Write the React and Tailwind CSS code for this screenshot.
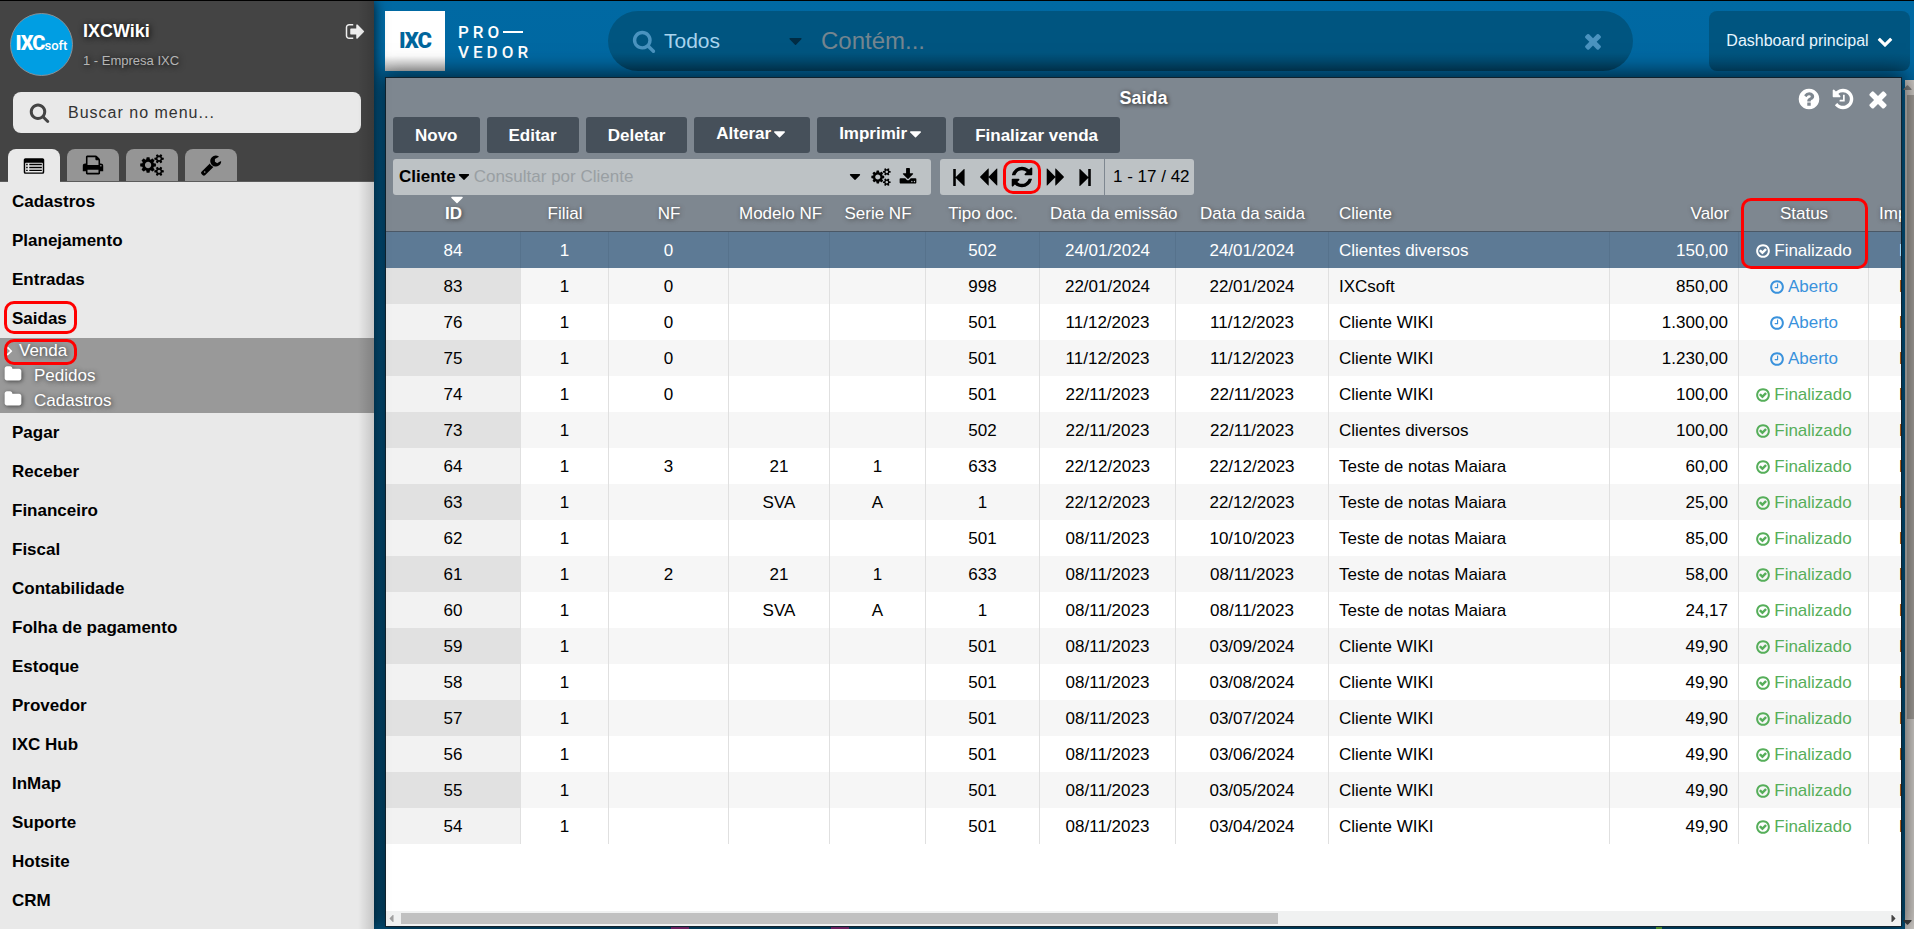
import { useState } from "react";

const PATHS = {
  times:
    "M1490 1322q0 40-28 68l-136 136q-28 28-68 28t-68-28l-294-294-294 294q-28 28-68 28t-68-28l-136-136q-28-28-28-68t28-68l294-294-294-294q-28-28-28-68t28-68l136-136q28-28 68-28t68 28l294 294 294-294q28-28 68-28t68 28l136 136q28 28 28 68t-28 68l-294 294 294 294q28 28 28 68z",
  search:
    "M1216 832q0-185-131.5-316.5t-316.5-131.5-316.5 131.5-131.5 316.5 131.5 316.5 316.5 131.5 316.5-131.5 131.5-316.5zm512 832q0 52-38 90t-90 38q-54 0-90-38l-343-342q-179 124-399 124-143 0-273.5-55.5t-225-150-150-225-55.5-273.5 55.5-273.5 150-225 225-150 273.5-55.5 273.5 55.5 225 150 150 225 55.5 273.5q0 220-124 399l343 343q37 37 37 90z",
  check:
    "M1299 813l-422 422q-19 19-45 19t-45-19l-294-294q-19-19-19-45t19-45l102-102q19-19 45-19t45 19l147 147 275-275q19-19 45-19t45 19l102 102q19 19 19 45t-19 45zm141 83q0-148-73-273t-198-198-273-73-273 73-198 198-73 273 73 273 198 198 273 73 273-73 198-198 73-273zm224 0q0 209-103 385.5t-279.5 279.5-385.5 103-385.5-103-279.5-279.5-103-385.5 103-385.5 279.5-279.5 385.5-103 385.5 103 279.5 279.5 103 385.5z",
  clock:
    "M1024 544v448q0 14-9 23t-23 9h-320q-14 0-23-9t-9-23v-64q0-14 9-23t23-9h224v-352q0-14 9-23t23-9h64q14 0 23 9t9 23zm416 352q0-148-73-273t-198-198-273-73-273 73-198 198-73 273 73 273 198 198 273 73 273-73 198-198 73-273zm224 0q0 209-103 385.5t-279.5 279.5-385.5 103-385.5-103-279.5-279.5-103-385.5 103-385.5 279.5-279.5 385.5-103 385.5 103 279.5 279.5 103 385.5z",
  question:
    "M1024 1376v-192q0-14-9-23t-23-9h-192q-14 0-23 9t-9 23v192q0 14 9 23t23 9h192q14 0 23-9t9-23zm256-672q0-88-55.5-163t-138.5-116-170-41q-243 0-371 213-15 24 8 42l132 100q7 6 19 6 16 0 25-12 53-68 86-92 34-24 86-24 48 0 85.5 26t37.5 59q0 38-20 61t-68 45q-63 28-115.5 86.5t-52.5 125.5v36q0 14 9 23t23 9h192q14 0 23-9t9-23q0-19 21.5-49.5t54.5-49.5q32-18 49-28.5t46-35 44.5-48 28-60.5 12.5-81zm384 192q0 209-103 385.5t-279.5 279.5-385.5 103-385.5-103-279.5-279.5-103-385.5 103-385.5 279.5-279.5 385.5-103 385.5 103 279.5 279.5 103 385.5z",
  history:
    "M1664 896q0 156-61 298t-164 245-245 164-298 61q-172 0-327-72.5t-264-204.5q-7-10-6.5-22.5t8.5-20.5l137-138q10-9 25-9 16 2 23 12 73 95 179 147t225 52q104 0 198.5-40.5t163.5-109.5 109.5-163.5 40.5-198.5-40.5-198.5-109.5-163.5-163.5-109.5-198.5-40.5q-98 0-188 35.5t-160 101.5l137 138q31 30 14 69-17 40-59 40h-448q-26 0-45-19t-19-45v-448q0-42 40-59 39-17 69 14l130 129q107-101 244.5-156.5t284.5-55.5q156 0 298 61t245 164 164 245 61 298zm-640-288v448q0 14-9 23t-23 9h-320q-14 0-23-9t-9-23v-64q0-14 9-23t23-9h224v-352q0-14 9-23t23-9h64q14 0 23 9t9 23z",
  signOut:
    "M704 1440q0 4 1 20t.5 26.5-3 23.5-10 19.5-20.5 6.5h-320q-119 0-203.5-84.5t-84.5-203.5v-704q0-119 84.5-203.5t203.5-84.5h320q13 0 22.5 9.5t9.5 22.5q0 4 1 20t.5 26.5-3 23.5-10 19.5-20.5 6.5h-320q-66 0-113 47t-47 113v704q0 66 47 113t113 47h312l11.5 1 11.5 3 8 5.5 7 9 2 13.5zm928-544q0 26-19 45l-544 544q-19 19-45 19t-45-19-19-45v-288h-448q-26 0-45-19t-19-45v-384q0-26 19-45t45-19h448v-288q0-26 19-45t45-19 45 19l544 544q19 19 19 45z",
  refresh:
    "M1639 1056q0 5-1 7-64 268-268 434.5t-478 166.5q-146 0-282.5-55t-243.5-157l-129 129q-19 19-45 19t-45-19-19-45v-448q0-26 19-45t45-19h448q26 0 45 19t19 45-19 45l-137 137q71 66 161 102t187 36q134 0 250-65t186-179q11-17 53-117 8-23 30-23h192q13 0 22.5 9.5t9.5 22.5zm25-800v448q0 26-19 45t-45 19h-448q-26 0-45-19t-19-45 19-45l138-138q-148-137-349-137-134 0-250 65t-186 179q-11 17-53 117-8 23-30 23h-199q-13 0-22.5-9.5t-9.5-22.5v-7q65-268 270-434.5t480-166.5q146 0 284 55.5t245 156.5l130-129q19-19 45-19t45 19 19 45z",
  folder:
    "M1728 608v704q0 92-66 158t-158 66h-1216q-92 0-158-66t-66-158v-960q0-92 66-158t158-66h320q92 0 158 66t66 158v32h672q92 0 158 66t66 158z",
  print:
    "M448 1536h896v-256h-896v256zm0-640h896v-384h-160q-40 0-68-28t-28-68v-160h-640v640zm1152 64q0-26-19-45t-45-19-45 19-19 45 19 45 45 19 45-19 19-45zm128 0v416q0 13-9.5 22.5t-22.5 9.5h-224v160q0 40-28 68t-68 28h-960q-40 0-68-28t-28-68v-160h-224q-13 0-22.5-9.5t-9.5-22.5v-416q0-79 56.5-135.5t135.5-56.5h64v-544q0-40 28-68t68-28h672q40 0 88 20t76 48l152 152q28 28 48 76t20 88v256h64q79 0 135.5 56.5t56.5 135.5z",
  wrench:
    "M448 1472q0-26-19-45t-45-19-45 19-19 45 19 45 45 19 45-19 19-45zm644-420l-682 682q-37 37-90 37-52 0-91-37l-106-108q-38-36-38-90 0-53 38-91l681-681q39 98 114.5 173.5t173.5 114.5zm634-435q0 39-23 106-47 134-164.5 217.5t-258.5 83.5q-185 0-316.5-131.5t-131.5-316.5 131.5-316.5 316.5-131.5q58 0 121.5 16.5t107.5 46.5q16 11 16 28t-16 28l-293 169v224l193 107q5-3 79-48.5t135.5-81 70.5-35.5q15 0 23.5 10t8.5 25z",
  cogs: "M832 896q0-106-75-181t-181-75-181 75-75 181 75 181 181 75 181-75 75-181zm768 512q0-52-38-90t-90-38-90 38-38 90q0 53 37.5 90.5t90.5 37.5 90.5-37.5 37.5-90.5zm0-1024q0-52-38-90t-90-38-90 38-38 90q0 53 37.5 90.5t90.5 37.5 90.5-37.5 37.5-90.5zm-384 421v185q0 10-7 19.5t-16 10.5l-155 24q-11 35-32 76 34 48 90 115 7 11 7 20 0 12-7 19-23 30-82.5 89.5t-78.5 59.5q-11 0-21-7l-115-90q-37 19-77 31-11 108-23 155-7 24-30 24h-186q-11 0-20-7.5t-10-17.5l-23-153q-34-10-75-31l-118 89q-7 7-20 7-11 0-21-8-144-133-144-160 0-9 7-19 10-14 41-53t47-61q-23-44-35-82l-152-24q-10-1-17-9.5t-7-19.5v-185q0-10 7-19.5t16-10.5l155-24q11-35 32-76-34-48-90-115-7-11-7-20 0-12 7-20 22-30 82-89t79-59q11 0 21 7l115 90q34-18 77-32 11-108 23-154 7-24 30-24h186q11 0 20 7.5t10 17.5l23 153q34 10 75 31l118-89q8-7 20-7 11 0 21 8 144 133 144 160 0 8-7 19-12 16-42 54t-45 60q23 48 34 82l152 23q10 2 17 10.5t7 19.5zm640 533v140q0 16-149 31-12 27-30 52 51 113 51 138 0 4-4 7-122 71-124 71-8 0-46-47t-52-68q-20 2-30 2t-30-2q-14 21-52 68t-46 47q-2 0-124-71-4-3-4-7 0-25 51-138-18-25-30-52-149-15-149-31v-140q0-16 149-31 13-29 30-52-51-113-51-138 0-4 4-7 4-2 35-20t59-34 30-16q8 0 46 46.5t52 67.5q20-2 30-2t30 2q51-71 92-112l6-2q4 0 124 70 4 3 4 7 0 25-51 138 17 23 30 52 149 15 149 31zm0-1024v140q0 16-149 31-12 27-30 52 51 113 51 138 0 4-4 7-122 71-124 71-8 0-46-47t-52-68q-20 2-30 2t-30-2q-14 21-52 68t-46 47q-2 0-124-71-4-3-4-7 0-25 51-138-18-25-30-52-149-15-149-31v-140q0-16 149-31 13-29 30-52-51-113-51-138 0-4 4-7 4-2 35-20t59-34 30-16q8 0 46 46.5t52 67.5q20-2 30-2t30 2q51-71 92-112l6-2q4 0 124 70 4 3 4 7 0 25-51 138 17 23 30 52 149 15 149 31z",
  chevronDown:
    "M1683 808l-742 741q-19 19-45 19t-45-19l-742-741q-19-19-19-45.5t19-45.5l166-165q19-19 45-19t45 19l531 531 531-531q19-19 45-19t45 19l166 165q19 19 19 45.5t-19 45.5z",
  angleRight:
    "M1221 960q0 23-20 43l-466 466q-20 20-43 20t-43-20l-60-60q-20-20-20-43t20-43l363-363-363-363q-20-20-20-43t20-43l60-60q20-20 43-20t43 20l466 466q20 20 20 43z",
  caret: "M1472 640q0 30-22 52l-504 504q-22 22-50 22t-50-22l-504-504q-22-22-22-52t22-52 52-22h1004q30 0 52 22t22 52z",
  list: "M200 256h1390q140 0 140 140v1000q0 140-140 140h-1390q-140 0-140-140v-1000q0-140 140-140zm20 384q-40 0-40 40v690q0 46 40 46h1350q40 0 40-46v-690q0-40-40-40zM256 720h128v110h-128zM512 720h1024v110h-1024zM256 960h128v110h-128zM512 960h1024v110h-1024zM256 1200h128v110h-128zM512 1200h1024v110h-1024z",
  first: "M360 168h220v680l700-670q50-40 50 30v1376q0 70-50 30l-700-670v680h-220z",
  last: "M1432 168h-220v680l-700-670q-50-40-50 30v1376q0 70 50 30l700-670v680h220z",
  back: "M1683 141q19-19 32-13t13 32v1472q0 26-13 32t-32-13l-710-710q-9-9-13-19v710q0 26-13 32t-32-13l-710-710q-19-19-19-45t19-45l710-710q19-19 32-13t13 32v710q4-10 13-19z",
  forward:
    "M109 1651q-19 19-32 13t-13-32v-1472q0-26 13-32t32 13l710 710q9 9 13 19v-710q0-26 13-32t32 13l710 710q19 19 19 45t-19 45l-710 710q-19 19-32 13t-13-32v-710q-4 10-13 19z",
  download:
    "M1344 1344q0-26-19-45t-45-19-45 19-19 45 19 45 45 19 45-19 19-45zm256 0q0-26-19-45t-45-19-45 19-19 45 19 45 45 19 45-19 19-45zm128-224v320q0 40-28 68t-68 28h-1472q-40 0-68-28t-28-68v-320q0-40 28-68t68-28h465l135 136q58 56 136 56t136-56l136-136h464q40 0 68 28t28 68zm-325-569q17 41-14 70l-448 448q-18 19-45 19t-45-19l-448-448q-31-29-14-70 17-39 59-39h256v-448q0-26 19-45t45-19h256q26 0 45 19t19 45v448h256q42 0 59 39z",
};

const Icon = ({ name, size = 16, className = "" }) => (
  <svg
    width={size}
    height={size}
    viewBox="0 0 1792 1792"
    fill="currentColor"
    fillRule="evenodd"
    aria-hidden="true"
    className={`shrink-0 overflow-visible ${className}`}
  >
    <path d={PATHS[name]} />
  </svg>
);

const menuBefore = ["Cadastros", "Planejamento", "Entradas", "Saidas"];
const menuAfter = [
  "Pagar",
  "Receber",
  "Financeiro",
  "Fiscal",
  "Contabilidade",
  "Folha de pagamento",
  "Estoque",
  "Provedor",
  "IXC Hub",
  "InMap",
  "Suporte",
  "Hotsite",
  "CRM",
];

const sideTabs = [
  { icon: "list", label: "Menu" },
  { icon: "print", label: "Relatórios" },
  { icon: "cogs", label: "Configurações" },
  { icon: "wrench", label: "Ferramentas" },
];

const columns = [
  { label: "ID", width: "w-[135px]" },
  { label: "Filial", width: "w-[88px]" },
  { label: "NF", width: "w-[120px]" },
  { label: "Modelo NF", width: "w-[101px]" },
  { label: "Serie NF", width: "w-[96px]" },
  { label: "Tipo doc.", width: "w-[114px]" },
  { label: "Data da emissão", width: "w-[136px]" },
  { label: "Data da saida", width: "w-[153px]" },
  { label: "Cliente", width: "w-[281px]", align: "text-left" },
  { label: "Valor", width: "w-[129px]", align: "text-right" },
  { label: "Status", width: "w-[130px]" },
  { label: "Impresso", width: "w-[200px]", align: "text-left" },
];

const rows = [
  ["84", "1", "0", "", "", "502", "24/01/2024", "24/01/2024", "Clientes diversos", "150,00", "Finalizado"],
  ["83", "1", "0", "", "", "998", "22/01/2024", "22/01/2024", "IXCsoft", "850,00", "Aberto"],
  ["76", "1", "0", "", "", "501", "11/12/2023", "11/12/2023", "Cliente WIKI", "1.300,00", "Aberto"],
  ["75", "1", "0", "", "", "501", "11/12/2023", "11/12/2023", "Cliente WIKI", "1.230,00", "Aberto"],
  ["74", "1", "0", "", "", "501", "22/11/2023", "22/11/2023", "Cliente WIKI", "100,00", "Finalizado"],
  ["73", "1", "", "", "", "502", "22/11/2023", "22/11/2023", "Clientes diversos", "100,00", "Finalizado"],
  ["64", "1", "3", "21", "1", "633", "22/12/2023", "22/12/2023", "Teste de notas Maiara", "60,00", "Finalizado"],
  ["63", "1", "", "SVA", "A", "1", "22/12/2023", "22/12/2023", "Teste de notas Maiara", "25,00", "Finalizado"],
  ["62", "1", "", "", "", "501", "08/11/2023", "10/10/2023", "Teste de notas Maiara", "85,00", "Finalizado"],
  ["61", "1", "2", "21", "1", "633", "08/11/2023", "08/11/2023", "Teste de notas Maiara", "58,00", "Finalizado"],
  ["60", "1", "", "SVA", "A", "1", "08/11/2023", "08/11/2023", "Teste de notas Maiara", "24,17", "Finalizado"],
  ["59", "1", "", "", "", "501", "08/11/2023", "03/09/2024", "Cliente WIKI", "49,90", "Finalizado"],
  ["58", "1", "", "", "", "501", "08/11/2023", "03/08/2024", "Cliente WIKI", "49,90", "Finalizado"],
  ["57", "1", "", "", "", "501", "08/11/2023", "03/07/2024", "Cliente WIKI", "49,90", "Finalizado"],
  ["56", "1", "", "", "", "501", "08/11/2023", "03/06/2024", "Cliente WIKI", "49,90", "Finalizado"],
  ["55", "1", "", "", "", "501", "08/11/2023", "03/05/2024", "Cliente WIKI", "49,90", "Finalizado"],
  ["54", "1", "", "", "", "501", "08/11/2023", "03/04/2024", "Cliente WIKI", "49,90", "Finalizado"],
];

const actions = [
  { label: "Novo" },
  { label: "Editar" },
  { label: "Deletar" },
  { label: "Alterar", menu: true },
  { label: "Imprimir", menu: true },
  { label: "Finalizar venda" },
];

const MenuItem = ({ label, marked }) => (
  <li className="relative h-[39px]">
    <a href="#" className="flex h-full items-center px-3 font-bold text-black">
      {label}
    </a>
    {marked && (
      <span className="absolute top-0.5 left-1 h-[33px] w-[73px] rounded-[10px] border-3 border-[#ff0000]" />
    )}
  </li>
);

const Sidebar = () => {
  const [tab, setTab] = useState(0);

  return (
    <aside className="relative z-20 flex w-[374px] shrink-0 flex-col bg-[#e9e9e9] shadow-[0_0_12px_rgba(0,0,0,0.8)]">
      {/* User */}
      <div className="border-b border-[#5c5c5c] bg-[#444444] pt-3">
        <div className="flex pr-2 pl-2.5">
          <div className="flex size-[63px] items-center justify-center rounded-full border border-[#8a8f94] bg-[#009ee3] font-['Roboto'] text-white">
            <span className="flex items-baseline">
              <span className="text-[20px] leading-5 font-black tracking-[-1px]">IXC</span>
              <span className="text-[13px] leading-5 font-medium">soft</span>
            </span>
          </div>
          <div className="ml-2.5 flex-1 pt-1.5 [text-shadow:1px_1px_6px_#000]">
            <div className="text-[18px] leading-6 font-bold text-white">IXCWiki</div>
            <div className="mt-2 text-[13px] leading-5 text-[#b5b5b5]">1 - Empresa IXC</div>
          </div>
          <button aria-label="Sair" className="mt-2 flex h-5 items-center text-[#eeeeee]">
            <Icon name="signOut" size={21} />
          </button>
        </div>

        {/* Menu search */}
        <label className="mx-[13px] mt-4 flex h-[41px] items-center rounded-lg bg-[#e9e9e9] px-4">
          <Icon name="search" size={21} className="text-[#444444]" />
          <input
            aria-label="Buscar no menu"
            placeholder="Buscar no menu..."
            className="ml-4.5 min-w-0 flex-1 text-[16px] tracking-[1px] text-black outline-none placeholder:text-[#333333]"
          />
        </label>

        <div className="flex gap-[7px] pt-4 pl-2">
          {sideTabs.map((t, i) => (
            <button
              key={t.icon}
              aria-label={t.label}
              onClick={() => setTab(i)}
              className={`flex w-[52px] items-center justify-center rounded-t-lg text-black ${
                tab === i ? "-mb-px h-[33px] bg-[#e9e9e9]" : "h-8 bg-[#959595]"
              }`}
            >
              <Icon name={t.icon} size={22} />
            </button>
          ))}
        </div>
      </div>

      <ul>
        {menuBefore.map((label) => (
          <MenuItem key={label} label={label} marked={label === "Saidas"} />
        ))}
        <li>
          <ul className="bg-[#999999] text-white [text-shadow:1px_1px_5px_#333]">
            <li className="relative">
              <a href="#" className="flex h-[25px] items-center pl-1">
                <Icon name="angleRight" size={15} className="-ml-0.5" />
                <span className="ml-0.5">Venda</span>
              </a>
              <span className="absolute top-px left-1 h-[26px] w-[73px] rounded-[10px] border-3 border-[#ff0000]" />
            </li>
            {["Pedidos", "Cadastros"].map((label) => (
              <li key={label}>
                <a href="#" className="flex h-[25px] items-center pl-1">
                  <Icon name="folder" size={18} className="-mt-1 drop-shadow-[1px_1px_2px_#444]" />
                  <span className="ml-3">{label}</span>
                </a>
              </li>
            ))}
          </ul>
        </li>
        {menuAfter.map((label) => (
          <MenuItem key={label} label={label} />
        ))}
      </ul>
      <div className="pointer-events-none absolute inset-y-0 right-0 w-4 bg-linear-to-r from-transparent to-black/15" />
    </aside>
  );
};

const TopBar = () => (
  <header className="flex h-[61px] shrink-0 pr-1">
    <div className="flex size-[60px] items-center justify-center bg-linear-to-b from-white from-75% to-[#c4c4c4] font-['Roboto'] text-[22px] font-black tracking-[-1px] text-[#00669c]">
      IXC
    </div>
    <div className="ml-[13px] flex w-[150px] flex-col justify-center font-['Roboto'] text-[17px] leading-5 font-medium tracking-[4px] text-white">
      <div className="flex items-center">
        PRO
        <span className="h-0.5 w-5 bg-white" />
      </div>
      <div>VEDOR</div>
    </div>
    <div className="flex h-[60px] flex-1 items-center rounded-full bg-linear-to-b from-[#005580] from-70% to-[#004264] pr-7 pl-6 text-[#a8d4ee]">
      <Icon name="search" size={24} className="text-[#4a93bf]" />
      <button className="ml-2 flex w-[141px] items-center justify-between text-[21px]">
        Todos
        <Icon name="caret" size={19} className="text-[#002c44]" />
      </button>
      <input
        aria-label="Contém"
        placeholder="Contém..."
        className="ml-4 min-w-0 flex-1 text-[24px] outline-none placeholder:text-[#75858f]"
      />
      <button aria-label="Limpar">
        <Icon name="times" size={24} className="text-[#4a93bf]" />
      </button>
    </div>
    <button className="ml-[76px] flex h-[60px] w-[201px] items-center justify-center gap-2 rounded-lg bg-linear-to-b from-[#005580] from-70% to-[#004b72] text-[16px] text-[#e8f6ff]">
      Dashboard principal
      <Icon name="chevronDown" size={16} className="text-white" />
    </button>
  </header>
);

const Status = ({ value, selected }) => {
  const open = value === "Aberto";
  const color = open ? "text-[#3a92dc]" : "text-[#56ae5a]";
  return (
    <span
      className={`flex items-center justify-center gap-[3px] ${selected ? "text-white" : color}`}
    >
      <Icon name={open ? "clock" : "check"} size={16} />
      {value}
    </span>
  );
};

const SalesTable = () => (
  <div className="relative min-h-0 flex-1 overflow-hidden bg-white">
    <table className="w-[1683px] table-fixed border-separate border-spacing-0 text-center">
      <colgroup>
        {columns.map((c) => (
          <col key={c.label} className={c.width} />
        ))}
      </colgroup>
      <thead>
        <tr className="h-[37px] bg-[#7e8790] text-white [text-shadow:1px_1px_4px_#444]">
          {columns.map((c, i) => (
            <th
              key={c.label}
              className={`relative border-b border-[#4b5866] px-2.5 pt-0.5 whitespace-nowrap ${
                c.align || ""
              } ${i === 0 ? "font-bold" : "font-normal"}`}
            >
              {i === 0 && (
                <Icon name="caret" size={18} className="absolute -top-1 left-[62px]" />
              )}
              {c.label}
            </th>
          ))}
        </tr>
      </thead>
      <tbody>
        {rows.map((row, r) => (
          <tr
            key={row[0]}
            className={`h-9 ${
              r === 0
                ? "bg-[#5d7a95] text-white"
                : r % 2
                  ? "bg-[#f6f6f6] text-black"
                  : "bg-white text-black"
            }`}
          >
            {columns.map((c, i) => (
              <td
                key={c.label}
                className={`px-2.5 pt-0.5 whitespace-nowrap ${c.align || ""} ${
                  i < 11 ? "border-r" : ""
                } ${r === 0 ? "border-[#56728c]" : "border-[#e0e0e0]"} ${
                  i === 0 && r > 0 ? (r % 2 ? "bg-[#e1e1e1]" : "bg-[#f2f2f2]") : ""
                }`}
              >
                {i === 10 ? (
                  <Status value={row[i]} selected={r === 0} />
                ) : i === 11 ? (
                  <span className="pl-5">Não</span>
                ) : (
                  row[i]
                )}
              </td>
            ))}
          </tr>
        ))}
      </tbody>
    </table>
    <span className="absolute top-[3px] left-[1355px] h-[71px] w-[127px] rounded-[10px] border-3 border-[#ff0000]" />
  </div>
);

const SalesWindow = () => (
  <section className="flex min-h-0 flex-1 flex-col border border-[#10222e] bg-[#7e8790] shadow-[0_0_20px_4px_rgba(0,0,0,0.65)]">
    <div className="relative flex h-[39px] shrink-0 items-center justify-center">
      <h1 className="text-[18px] font-bold text-white [text-shadow:1px_1px_4px_#222]">Saida</h1>
      <div className="absolute top-2 right-2.5 flex items-center gap-2.5 text-white">
        <button aria-label="Ajuda">
          <Icon name="question" size={24} />
        </button>
        <button aria-label="Histórico">
          <Icon name="history" size={24} />
        </button>
        <button aria-label="Fechar">
          <Icon name="times" size={26} />
        </button>
      </div>
    </div>

    <div className="flex gap-[7px] px-[7px]">
      {actions.map((a) => (
        <button
          key={a.label}
          className={`flex h-9 items-center rounded-[3px] bg-[#46505a] px-[22px] font-bold text-white ${
            a.menu ? "pb-0.5" : "pt-0.5"
          }`}
        >
          {a.label}
          {a.menu && <Icon name="caret" size={17} />}
        </button>
      ))}
    </div>

    <div className="mt-1.5 flex gap-[9px] px-[7px]">
      <div className="flex h-9 w-[538px] items-center rounded-[3px] bg-[#bdc2c5] pr-3.5 pl-1.5 text-black">
        <button className="flex items-center font-bold">
          Cliente
          <Icon name="caret" size={16} />
        </button>
        <input
          aria-label="Consultar por Cliente"
          placeholder="Consultar por Cliente"
          className="ml-0.5 min-w-0 flex-1 outline-none placeholder:text-[#999fa3]"
        />
        <div className="flex items-center gap-[9px]">
          <button aria-label="Opções">
            <Icon name="caret" size={16} />
          </button>
          <button aria-label="Configurar">
            <Icon name="cogs" size={18} />
          </button>
          <button aria-label="Baixar">
            <Icon name="download" size={18} />
          </button>
        </div>
      </div>
      <div className="flex h-9 items-stretch rounded-[3px] bg-[#bdc2c5] text-black">
        <div className="flex items-center gap-2 px-[9px]">
          <button aria-label="Primeira página">
            <Icon name="first" size={21} />
          </button>
          <button aria-label="Página anterior">
            <Icon name="back" size={20} />
          </button>
          <button aria-label="Atualizar" className="relative mx-1">
            <Icon name="refresh" size={24} />
            <span className="absolute -inset-x-[7px] -inset-y-[5px] rounded-[10px] border-3 border-[#ff0000]" />
          </button>
          <button aria-label="Próxima página">
            <Icon name="forward" size={20} />
          </button>
          <button aria-label="Última página">
            <Icon name="last" size={21} />
          </button>
        </div>
        <div className="flex items-center border-l border-[#7e8790] pr-1 pl-2">1 - 17 / 42</div>
      </div>
    </div>

    <SalesTable />

    {/* Horizontal scroll bar */}
    <div className="flex h-[15px] shrink-0 items-center justify-between bg-[#f0f1f1]">
      <Icon name="caret" size={11} className="rotate-90 text-[#a0a0a0]" />
      <div className="ml-1 flex-1">
        <div className="h-[11px] w-[59%] bg-[#c1c1c1]" />
      </div>
      <Icon name="caret" size={11} className="mr-0.5 -rotate-90 text-[#444444]" />
    </div>
  </section>
);

const App = () => (
  <div className="flex h-screen overflow-hidden border-t border-black bg-linear-to-b from-[#0069a3] to-[#005a8a] font-['Liberation_Sans',sans-serif] text-[17px] leading-6">
    <Sidebar />
    <div className="flex min-w-0 flex-1 flex-col pt-2.5 pl-[11px]">
      <TopBar />
      <div className="mt-[5px] flex min-h-0 flex-1">
        <main className="z-10 flex min-w-0 flex-1 flex-col">
          <SalesWindow />
          {/* Tops of the dashboard cards behind the window */}
          <div className="z-10 flex h-0.5 shrink-0 gap-[142px] pr-[240px] pl-[286px]">
            <span className="w-[18px] bg-[#6a2160]" />
            <span className="w-[18px] bg-[#6a2160]" />
            <span className="ml-auto w-1.5 bg-[#4c8a2c]" />
          </div>
        </main>
        <div className="mt-[3px] ml-[3px] flex w-[9px] flex-col items-end bg-[#d4d0cc]">
          <Icon name="caret" size={13} className="my-px rotate-180 text-[#888888]" />
          <div className="h-[624px] w-[7px] bg-[#a5a19c]" />
          <div className="flex-1" />
          <Icon name="caret" size={13} className="text-[#444444]" />
        </div>
      </div>
    </div>
  </div>
);

export default App;
